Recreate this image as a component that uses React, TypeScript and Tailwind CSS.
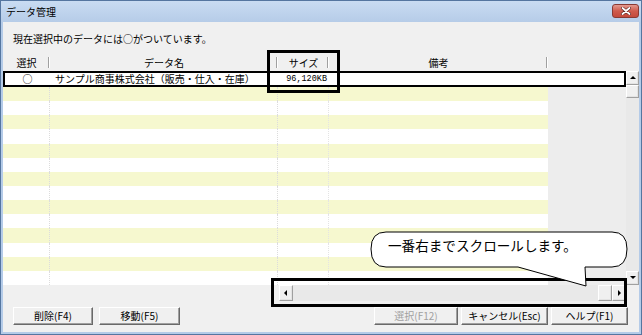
import React from "react";

function Tri({ dir }: { dir: "up" | "down" | "left" | "right" }) {
  const pts: Record<string, string> = {
    up: "1,5 7,5 4,2",
    down: "1,2 7,2 4,5",
    left: "5,1 5,7 2,4",
    right: "3,1 3,7 6,4",
  };
  return (
    <svg width="8" height="8" viewBox="0 0 8 8">
      <polygon points={pts[dir]} fill="#000" />
    </svg>
  );
}

function SbBtn({ dir, className = "" }: { dir?: "up" | "down" | "left" | "right"; className?: string }) {
  return (
    <div
      className={
        "flex items-center justify-center bg-[#f0f0f0] border border-t-white border-l-white border-r-[#a0a0a0] border-b-[#a0a0a0] shadow-[inset_-1px_-1px_0_#e3e3e3] " +
        className
      }
    >
      {dir && <Tri dir={dir} />}
    </div>
  );
}

function PushBtn({ label, w, disabled }: { label: string; w: string; disabled?: boolean }) {
  return (
    <div
      className={
        "h-[18px] flex items-center justify-center bg-[#f0f0f0] border border-t-white border-l-white border-r-[#696969] border-b-[#696969] shadow-[inset_-1px_-1px_0_#a0a0a0] text-[10px] " +
        w +
        (disabled ? " text-[#a0a0a0]" : " text-black")
      }
    >
      {label}
    </div>
  );
}

export default function App() {
  const rows = Array.from({ length: 14 }, (_, i) => i);

  return (
    <div className="relative w-[642px] h-[335px] overflow-hidden font-['Noto_Sans_CJK_JP','Noto_Sans',sans-serif] text-[10px] leading-none text-black">
      <div className="w-full h-full flex flex-col border border-[#5576a0] bg-[#f0f0f0]">
        {/* title bar */}
        <div className="h-[21px] flex items-start justify-between bg-gradient-to-b from-[#c9dcf2] to-[#b6cce8] pl-[5px] pr-[2px]">
          <span className="mt-[6px] text-[10px]">データ管理</span>
          <div className="mt-[3px] w-[27px] h-[14px] rounded-[3px] border border-[#8a3a33] bg-gradient-to-b from-[#e39a8f] via-[#cf5a4c] to-[#c44a3c] flex items-center justify-center">
            <svg width="10" height="8" viewBox="0 0 10 8">
              <path d="M1.5 1 L8.5 7 M8.5 1 L1.5 7" stroke="#5a2520" strokeWidth="3" strokeLinecap="round" />
              <path d="M1.5 1 L8.5 7 M8.5 1 L1.5 7" stroke="#fff" strokeWidth="1.8" strokeLinecap="round" />
            </svg>
          </div>
        </div>

        {/* body */}
        <div className="flex-1 flex flex-col border-x-2 border-b-2 border-[#b4cbe8]">
          <div className="h-[33px] flex items-center pl-[10px]">現在選択中のデータには○がついています。</div>

          {/* header */}
          <div className="h-[16px] flex">
            {[
              ["選択", "w-[47px]"],
              ["データ名", "w-[228px]"],
              ["サイズ", "w-[51px]"],
              ["備考", "w-[219px]"],
            ].map(([t, w]) => (
              <div key={t} className={"relative flex items-center justify-center bg-[#f0f0f0] " + w}>
                {t}
                <div className="absolute right-0 top-[2px] h-[11px] w-[2px] border-l border-[#a0a0a0] bg-white" />
              </div>
            ))}
          </div>

          {/* list + vertical scrollbar */}
          <div className="h-[214px] flex">
            <div className="w-[623px] flex flex-col">
              <div className="h-[16px] flex items-center border-2 border-black bg-white">
                <div className="w-[45px] flex justify-center">○</div>
                <div className="w-[228px] pl-[5px]">サンプル商事株式会社（販売・仕入・在庫）</div>
                <div className="w-[51px] flex justify-end pr-[2px] font-['Liberation_Mono',monospace] text-[8.5px] text-black">96,120KB</div>
              </div>
              <div className="flex-1 flex flex-col">
                {rows.map((i) => (
                  <div key={i} className="flex-1 flex">
                    <div className={"w-[545px] flex " + (i % 2 === 0 ? "bg-[#f6f8cf]" : "bg-white")}>
                      <div className="w-[47px] border-r border-dotted border-[#dcdcdc]" />
                      <div className="w-[228px] border-r border-dotted border-[#dcdcdc]" />
                      <div className="w-[51px] border-r border-dotted border-[#e4e4e4]" />
                      <div className="flex-1" />
                    </div>
                    <div className="flex-1 bg-[#ededed]" />
                  </div>
                ))}
              </div>
            </div>
            <div className="w-[13px] flex flex-col bg-[#e9e9e9]">
              <SbBtn dir="up" className="h-[14px]" />
              <SbBtn className="h-[13px]" />
              <div className="flex-1" />
              <SbBtn dir="down" className="h-[14px]" />
            </div>
          </div>

          {/* horizontal scrollbar */}
          <div className="h-[16px] flex">
            <div className="w-[276px]" />
            <div className="w-[347px] flex bg-[#e9e9e9]">
              <SbBtn dir="left" className="w-[14px]" />
              <div className="flex-1" />
              <SbBtn className="w-[14px]" />
              <SbBtn dir="right" className="w-[14px]" />
            </div>
          </div>

          {/* buttons */}
          <div className="mt-[6px] flex pl-[10px] pr-[11px]">
            <div className="flex gap-[6px]">
              <PushBtn label="削除(F4)" w="w-[80px]" />
              <PushBtn label="移動(F5)" w="w-[81px]" />
            </div>
            <div className="ml-auto flex gap-[3px]">
              <PushBtn label="選択(F12)" w="w-[84px]" disabled />
              <PushBtn label="キャンセル(Esc)" w="w-[87px]" />
              <PushBtn label="ヘルプ(F1)" w="w-[77px]" />
            </div>
          </div>
        </div>
      </div>

      {/* annotation: size column */}
      <div className="absolute left-[267px] top-[50px] w-[73px] h-[43px] border-[3px] border-black" />
      {/* annotation: horizontal scrollbar */}
      <div className="absolute left-[271px] top-[278px] w-[356px] h-[29px] border-[3px] border-black" />

      {/* callout */}
      <div className="absolute left-[368px] top-[230px] w-[262px] h-[58px]">
        <svg width="262" height="58" viewBox="0 0 262 58" className="absolute inset-0">
          <path
            d="M18 2 H244 Q259 2 259 19 Q259 37 244 37 H217 L218 56 L150 37 H18 Q3 37 3 19 Q3 2 18 2 Z"
            fill="#fff"
            stroke="#000"
            strokeWidth="1"
          />
        </svg>
        <div className="absolute left-[20px] top-[9px] text-[13.6px] leading-none">一番右までスクロールします。</div>
      </div>
    </div>
  );
}
